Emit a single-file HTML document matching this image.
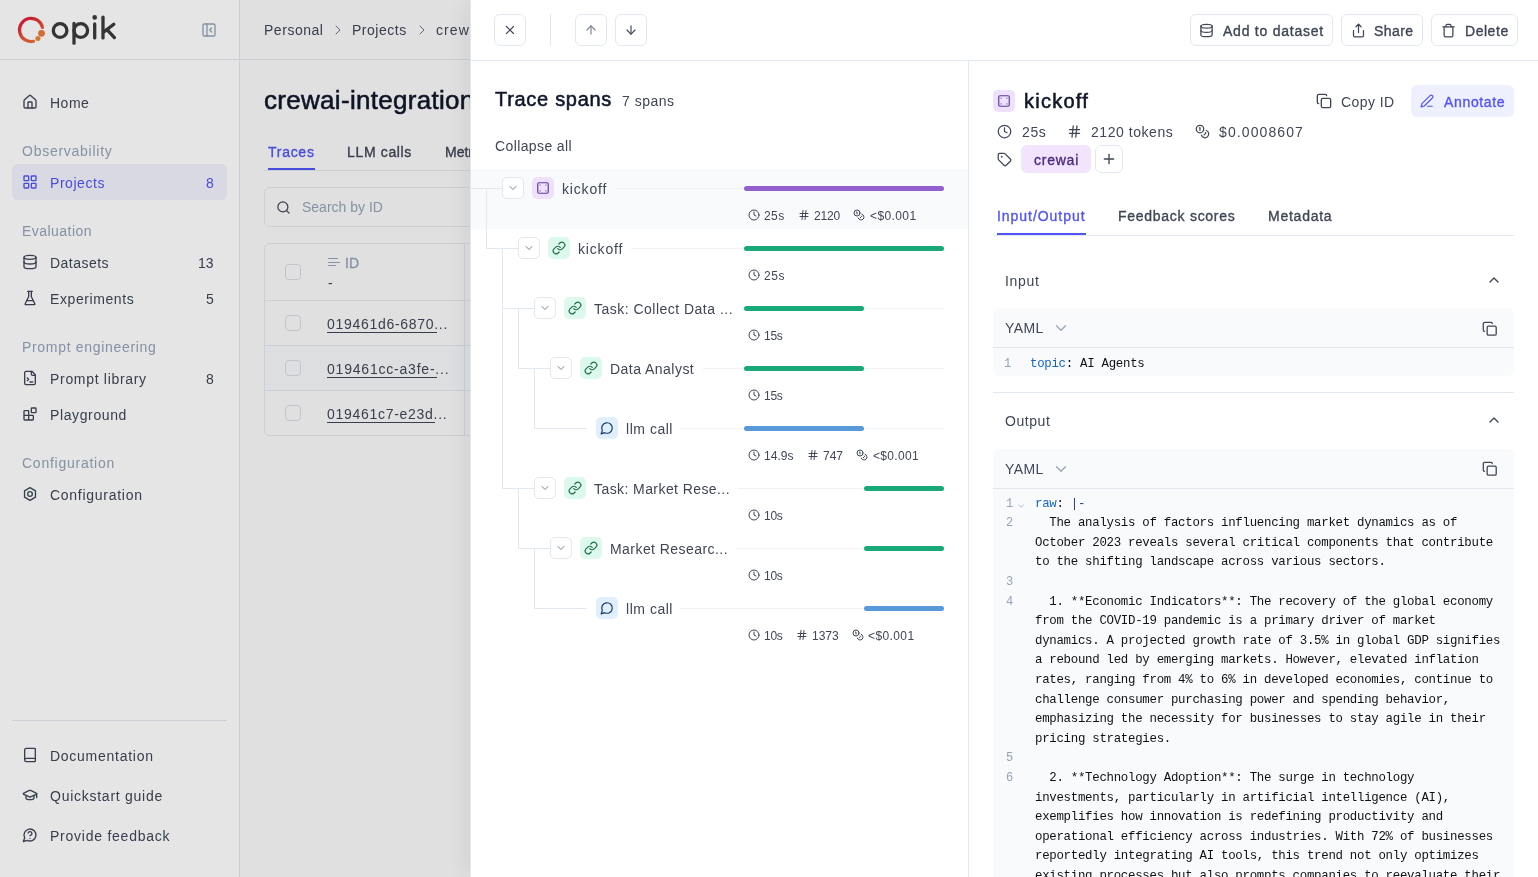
<!DOCTYPE html>
<html><head><meta charset="utf-8">
<style>
*{box-sizing:border-box;margin:0;padding:0}
html,body{width:1538px;height:877px;overflow:hidden;background:#fff;font-family:"Liberation Sans",sans-serif;color:#373D4D}
.a{position:absolute}
.t{position:absolute;white-space:pre;line-height:20px;font-size:14px;will-change:transform}
svg{display:block}
.ic{position:absolute;fill:none;stroke:currentColor;stroke-linecap:round;stroke-linejoin:round}
</style></head>
<body>

<div class="a" style="left:239px;top:0px;width:1px;height:877px;background:#E2E8F0"></div>
<div class="a" style="left:0px;top:59px;width:1538px;height:1px;background:#E2E8F0"></div>
<svg class="a" style="left:0;top:0" width="130" height="60" viewBox="0 0 130 60">
<defs><linearGradient id="lg" x1="20" y1="18" x2="36" y2="44" gradientUnits="userSpaceOnUse"><stop offset="0" stop-color="#DC1238"/><stop offset="1" stop-color="#EE7A36"/></linearGradient></defs>
<path d="M42.45 27.49 A11.6 11.6 0 1 0 33.51 41.25" stroke="url(#lg)" stroke-width="3.2" fill="none" stroke-linecap="round"/>
<circle cx="41.5" cy="33.3" r="3.4" fill="#EC7A36"/><circle cx="37.9" cy="38.4" r="2.5" fill="#EE8434"/>
<g stroke="#3A3A3D" stroke-width="3.3" fill="none" stroke-linecap="round" stroke-linejoin="round">
<circle cx="60.1" cy="30.5" r="6.8"/><circle cx="80.8" cy="30.5" r="6.8"/><path d="M74 23.4V43.2"/><path d="M94.7 24V37.9"/><path d="M103 17.2V37.9"/><path d="M113.8 24.2 104.6 31.4"/><path d="M107 29.6 114.4 37.6"/></g>
<circle cx="94.7" cy="17.4" r="2.3" fill="#3A3A3D"/></svg>
<svg class="ic" style="left:201px;top:22px;color:#94A3B8;" width="16" height="16" viewBox="0 0 24 24" stroke-width="2"><rect width="18" height="18" x="3" y="3" rx="2"/><path d="M9 3v18"/><path d="m16 15-3-3 3-3"/></svg>
<svg class="ic" style="left:22px;top:94px;color:#3F4656;" width="16" height="16" viewBox="0 0 24 24" stroke-width="2"><path d="M15 21v-8a1 1 0 0 0-1-1h-4a1 1 0 0 0-1 1v8"/><path d="M3 10a2 2 0 0 1 .709-1.528l7-5.999a2 2 0 0 1 2.582 0l7 5.999A2 2 0 0 1 21 10v9a2 2 0 0 1-2 2H5a2 2 0 0 1-2-2z"/></svg>
<div class="t" style="top:93.15px;font-size:14px;line-height:20px;color:#3F4656;left:50px;letter-spacing:0.514px;">Home</div>
<div class="t" style="top:141.15px;font-size:14px;line-height:20px;color:#94A3B8;left:22px;letter-spacing:0.737px;">Observability</div>
<div class="a" style="left:12px;top:164px;width:215px;height:36px;border-radius:6px;background:#F2F2FD"></div>
<svg class="ic" style="left:22px;top:174px;color:#5155F5;" width="16" height="16" viewBox="0 0 24 24" stroke-width="2"><rect width="7" height="7" x="3" y="3" rx="1"/><rect width="7" height="7" x="14" y="3" rx="1"/><rect width="7" height="7" x="14" y="14" rx="1"/><rect width="7" height="7" x="3" y="14" rx="1"/></svg>
<div class="t" style="top:173.15px;font-size:14px;line-height:20px;color:#5155F5;left:50px;letter-spacing:0.553px;">Projects</div>
<div class="t" style="top:173.15px;font-size:14px;line-height:20px;color:#5155F5;right:1324px;">8</div>
<div class="t" style="top:221.15px;font-size:14px;line-height:20px;color:#94A3B8;left:22px;letter-spacing:0.462px;">Evaluation</div>
<svg class="ic" style="left:22px;top:254px;color:#3F4656;" width="16" height="16" viewBox="0 0 24 24" stroke-width="2"><ellipse cx="12" cy="5" rx="9" ry="3"/><path d="M3 5V19A9 3 0 0 0 21 19V5"/><path d="M3 12A9 3 0 0 0 21 12"/></svg>
<div class="t" style="top:253.15px;font-size:14px;line-height:20px;color:#3F4656;left:50px;letter-spacing:0.481px;">Datasets</div>
<div class="t" style="top:253.15px;font-size:14px;line-height:20px;color:#3F4656;right:1324px;">13</div>
<svg class="ic" style="left:22px;top:290px;color:#3F4656;" width="16" height="16" viewBox="0 0 24 24" stroke-width="2"><path d="M10 2v7.527a2 2 0 0 1-.211.896L4.72 20.55a1 1 0 0 0 .9 1.45h12.76a1 1 0 0 0 .9-1.45l-5.069-10.127A2 2 0 0 1 14 9.527V2"/><path d="M8.5 2h7"/><path d="M7 16h10"/></svg>
<div class="t" style="top:289.15px;font-size:14px;line-height:20px;color:#3F4656;left:50px;letter-spacing:0.590px;">Experiments</div>
<div class="t" style="top:289.15px;font-size:14px;line-height:20px;color:#3F4656;right:1324px;">5</div>
<div class="t" style="top:337.15px;font-size:14px;line-height:20px;color:#94A3B8;left:22px;letter-spacing:0.684px;">Prompt engineering</div>
<svg class="ic" style="left:22px;top:370px;color:#3F4656;" width="16" height="16" viewBox="0 0 24 24" stroke-width="2"><path d="M15 2H6a2 2 0 0 0-2 2v16a2 2 0 0 0 2 2h12a2 2 0 0 0 2-2V7Z"/><path d="M14 2v4a2 2 0 0 0 2 2h4"/><path d="m8 16 2-2-2-2"/><path d="M12 18h4"/></svg>
<div class="t" style="top:369.15px;font-size:14px;line-height:20px;color:#3F4656;left:50px;letter-spacing:0.691px;">Prompt library</div>
<div class="t" style="top:369.15px;font-size:14px;line-height:20px;color:#3F4656;right:1324px;">8</div>
<svg class="ic" style="left:22px;top:406px;color:#3F4656;" width="16" height="16" viewBox="0 0 24 24" stroke-width="2"><rect width="7" height="7" x="14" y="3" rx="1"/><path d="M10 21V8a1 1 0 0 0-1-1H4a1 1 0 0 0-1 1v12a1 1 0 0 0 1 1h12a1 1 0 0 0 1-1v-5a1 1 0 0 0-1-1H3"/></svg>
<div class="t" style="top:405.15px;font-size:14px;line-height:20px;color:#3F4656;left:50px;letter-spacing:0.617px;">Playground</div>
<div class="t" style="top:453.15px;font-size:14px;line-height:20px;color:#94A3B8;left:22px;letter-spacing:0.748px;">Configuration</div>
<svg class="ic" style="left:22px;top:486px;color:#3F4656;" width="16" height="16" viewBox="0 0 24 24" stroke-width="2"><path d="M12 2.5 20.2 7.2v9.6L12 21.5 3.8 16.8V7.2z"/><circle cx="12" cy="12" r="3.5"/></svg>
<div class="t" style="top:485.15px;font-size:14px;line-height:20px;color:#3F4656;left:50px;letter-spacing:0.725px;">Configuration</div>
<div class="a" style="left:12px;top:720px;width:215px;height:1px;background:#E2E8F0"></div>
<svg class="ic" style="left:22px;top:747px;color:#3F4656;" width="16" height="16" viewBox="0 0 24 24" stroke-width="2"><path d="M4 19.5v-15A2.5 2.5 0 0 1 6.5 2H19a1 1 0 0 1 1 1v18a1 1 0 0 1-1 1H6.5a1 1 0 0 1 0-5H20"/></svg>
<div class="t" style="top:746.15px;font-size:14px;line-height:20px;color:#3F4656;left:50px;letter-spacing:0.733px;">Documentation</div>
<svg class="ic" style="left:22px;top:787px;color:#3F4656;" width="16" height="16" viewBox="0 0 24 24" stroke-width="2"><path d="M21.42 10.922a1 1 0 0 0-.019-1.838L12.83 5.18a2 2 0 0 0-1.66 0L2.6 9.08a1 1 0 0 0 0 1.832l8.57 3.908a2 2 0 0 0 1.66 0z"/><path d="M22 10v6"/><path d="M6 12.5V16a6 3 0 0 0 12 0v-3.5"/></svg>
<div class="t" style="top:786.15px;font-size:14px;line-height:20px;color:#3F4656;left:50px;letter-spacing:0.740px;">Quickstart guide</div>
<svg class="ic" style="left:22px;top:827px;color:#3F4656;" width="16" height="16" viewBox="0 0 24 24" stroke-width="2"><path d="M7.9 20A9 9 0 1 0 4 16.1L2 22Z"/><path d="M9.09 9a3 3 0 0 1 5.83 1c0 2-3 3-3 3"/><path d="M12 17h.01"/></svg>
<div class="t" style="top:826.15px;font-size:14px;line-height:20px;color:#3F4656;left:50px;letter-spacing:0.758px;">Provide feedback</div>
<div class="a" style="left:240px;top:0px;width:1298px;height:877px;background:#FAFAFA"></div>
<div class="a" style="left:240px;top:59px;width:1298px;height:1px;background:#E2E8F0"></div>
<div class="t" style="top:20.15px;font-size:14px;line-height:20px;color:#3F4656;left:264px;letter-spacing:0.531px;">Personal</div>
<svg class="ic" style="left:329.5px;top:22px;color:#64748B;" width="16" height="16" viewBox="0 0 24 24" stroke-width="1.5"><path d="m9 18 6-6-6-6"/></svg>
<div class="t" style="top:20.15px;font-size:14px;line-height:20px;color:#3F4656;left:352px;letter-spacing:0.516px;">Projects</div>
<svg class="ic" style="left:414px;top:22px;color:#64748B;" width="16" height="16" viewBox="0 0 24 24" stroke-width="1.5"><path d="m9 18 6-6-6-6"/></svg>
<div class="t" style="top:20.15px;font-size:14px;line-height:20px;color:#3F4656;left:436px;letter-spacing:1.084px;">crewai-integration</div>
<div class="t" style="top:83.99px;font-size:26px;line-height:32px;color:#0F172A;left:264px;letter-spacing:0.300px;-webkit-text-stroke:0.55px currentColor;">crewai-integration</div>
<div class="t" style="top:141.65px;font-size:14px;line-height:20px;color:#5155F5;left:268px;letter-spacing:0.722px;-webkit-text-stroke:0.35px currentColor;">Traces</div>
<div class="a" style="left:268px;top:168px;width:47px;height:2px;background:#5155F5"></div>
<div class="t" style="top:141.65px;font-size:14px;line-height:20px;color:#3F4656;left:347px;letter-spacing:0.652px;-webkit-text-stroke:0.35px currentColor;">LLM calls</div>
<div class="t" style="top:141.65px;font-size:14px;line-height:20px;color:#3F4656;left:445px;-webkit-text-stroke:0.35px currentColor;">Metrics</div>
<div class="a" style="left:264px;top:170px;width:1000px;height:1px;background:#E2E8F0"></div>
<div class="a" style="left:264px;top:187px;width:420px;height:40px;border:1px solid #E2E8F0;border-radius:6px"></div>
<svg class="ic" style="left:276px;top:200px;color:#3F4656;" width="15" height="15" viewBox="0 0 24 24" stroke-width="2"><circle cx="11" cy="11" r="8"/><path d="m21 21-4.3-4.3"/></svg>
<div class="t" style="top:197.15px;font-size:14px;line-height:20px;color:#94A3B8;left:301.5px;">Search by ID</div>
<div class="a" style="left:264px;top:243px;width:900px;height:193px;border:1px solid #E2E8F0;border-radius:6px"></div>
<div class="a" style="left:265px;top:346px;width:899px;height:44px;background:#F6F8FA"></div>
<div class="a" style="left:265px;top:300px;width:899px;height:1px;background:#E2E8F0"></div>
<div class="a" style="left:265px;top:345px;width:899px;height:1px;background:#E2E8F0"></div>
<div class="a" style="left:265px;top:390px;width:899px;height:1px;background:#E2E8F0"></div>
<div class="a" style="left:464px;top:244px;width:1px;height:191px;background:#E2E8F0"></div>
<div class="a" style="left:285px;top:264px;width:16px;height:16px;border:1px solid #D5DCE5;border-radius:4px"></div>
<div class="a" style="left:285px;top:315px;width:16px;height:16px;border:1px solid #D5DCE5;border-radius:4px"></div>
<div class="a" style="left:285px;top:360px;width:16px;height:16px;border:1px solid #D5DCE5;border-radius:4px"></div>
<div class="a" style="left:285px;top:405px;width:16px;height:16px;border:1px solid #D5DCE5;border-radius:4px"></div>
<div class="a" style="left:328px;top:257.8px;width:9.5px;height:1.4px;background:#94A3B8;border-radius:1px"></div>
<div class="a" style="left:328px;top:261.5px;width:12px;height:1.4px;background:#94A3B8;border-radius:1px"></div>
<div class="a" style="left:328px;top:265px;width:8px;height:1.4px;background:#94A3B8;border-radius:1px"></div>
<div class="t" style="top:252.65px;font-size:14px;line-height:20px;color:#94A3B8;left:345px;-webkit-text-stroke:0.35px currentColor;">ID</div>
<div class="t" style="top:273.15px;font-size:14px;line-height:20px;color:#3F4656;left:328px;">-</div>
<div class="t" style="top:314.15px;font-size:14px;line-height:20px;color:#3F4656;left:327px;letter-spacing:0.702px;">019461d6-6870...</div>
<div class="a" style="left:327px;top:332px;width:110px;height:1px;background:#3F4656"></div>
<div class="t" style="top:359.15px;font-size:14px;line-height:20px;color:#3F4656;left:327px;letter-spacing:0.791px;">019461cc-a3fe-...</div>
<div class="a" style="left:327px;top:377px;width:110px;height:1px;background:#3F4656"></div>
<div class="t" style="top:404.15px;font-size:14px;line-height:20px;color:#3F4656;left:327px;letter-spacing:0.714px;">019461c7-e23d...</div>
<div class="a" style="left:327px;top:422px;width:108px;height:1px;background:#3F4656"></div>
<div class="a" style="left:0px;top:0px;width:1538px;height:877px;background:rgba(0,0,0,0.1)"></div>
<div class="a" style="left:470px;top:0px;width:1068px;height:877px;background:#fff;box-shadow:-4px 0 26px rgba(0,0,0,0.08)"></div>
<div class="a" style="left:470px;top:0px;width:1px;height:877px;background:#E2E8F0"></div>
<div class="a" style="left:470px;top:60px;width:1068px;height:1px;background:#E2E8F0"></div>
<div class="a" style="left:968px;top:61px;width:1px;height:816px;background:#E2E8F0"></div>
<div class="a" style="left:494px;top:14px;width:32px;height:32px;border:1px solid #E2E8F0;border-radius:6px;background:#fff;"></div>
<svg class="ic" style="left:503px;top:23px;color:#3F4656;" width="14" height="14" viewBox="0 0 24 24" stroke-width="2"><path d="M18 6 6 18"/><path d="m6 6 12 12"/></svg>
<div class="a" style="left:550px;top:14px;width:1px;height:32px;background:#E2E8F0"></div>
<div class="a" style="left:575px;top:14px;width:32px;height:32px;border:1px solid #E2E8F0;border-radius:6px;background:#fff;"></div>
<svg class="ic" style="left:584px;top:23px;color:#7A8294;" width="14" height="14" viewBox="0 0 24 24" stroke-width="2"><path d="m5 12 7-7 7 7"/><path d="M12 19V5"/></svg>
<div class="a" style="left:615px;top:14px;width:32px;height:32px;border:1px solid #E2E8F0;border-radius:6px;background:#fff;"></div>
<svg class="ic" style="left:624px;top:23px;color:#3F4656;" width="14" height="14" viewBox="0 0 24 24" stroke-width="2"><path d="M12 5v14"/><path d="m19 12-7 7-7-7"/></svg>
<div class="a" style="left:1190px;top:14px;width:143px;height:32px;border:1px solid #E2E8F0;border-radius:6px;background:#fff;"></div>
<svg class="ic" style="left:1199px;top:23px;color:#3F4656;" width="15" height="15" viewBox="0 0 24 24" stroke-width="2"><ellipse cx="12" cy="5" rx="9" ry="3"/><path d="M3 5V19A9 3 0 0 0 21 19V5"/><path d="M3 12A9 3 0 0 0 21 12"/></svg>
<div class="t" style="top:20.65px;font-size:14px;line-height:20px;color:#3F4656;left:1223px;letter-spacing:0.765px;-webkit-text-stroke:0.35px currentColor;">Add to dataset</div>
<div class="a" style="left:1341px;top:14px;width:82px;height:32px;border:1px solid #E2E8F0;border-radius:6px;background:#fff;"></div>
<svg class="ic" style="left:1351px;top:23px;color:#3F4656;" width="15" height="15" viewBox="0 0 24 24" stroke-width="2"><path d="M4 12v8a2 2 0 0 0 2 2h12a2 2 0 0 0 2-2v-8"/><path d="M16 6 12 2 8 6"/><path d="M12 2v13"/></svg>
<div class="t" style="top:20.65px;font-size:14px;line-height:20px;color:#3F4656;left:1374.4px;letter-spacing:0.448px;-webkit-text-stroke:0.35px currentColor;">Share</div>
<div class="a" style="left:1431px;top:14px;width:87px;height:32px;border:1px solid #E2E8F0;border-radius:6px;background:#fff;"></div>
<svg class="ic" style="left:1441px;top:23px;color:#3F4656;" width="15" height="15" viewBox="0 0 24 24" stroke-width="2"><path d="M3 6h18"/><path d="M19 6v14c0 1-1 2-2 2H7c-1 0-2-1-2-2V6"/><path d="M8 6V4c0-1 1-2 2-2h4c1 0 2 1 2 2v2"/></svg>
<div class="t" style="top:20.65px;font-size:14px;line-height:20px;color:#3F4656;left:1464.5px;letter-spacing:0.539px;-webkit-text-stroke:0.35px currentColor;">Delete</div>
<div class="t" style="top:85.07px;font-size:20px;line-height:28px;color:#0F172A;left:495px;letter-spacing:0.699px;-webkit-text-stroke:0.55px currentColor;">Trace spans</div>
<div class="t" style="top:91.15px;font-size:14px;line-height:20px;color:#3F4656;left:621.6px;letter-spacing:0.495px;">7 spans</div>
<div class="t" style="top:136.15px;font-size:14px;line-height:20px;color:#3F4656;left:495px;letter-spacing:0.386px;">Collapse all</div>
<div class="a" style="left:471px;top:169px;width:497px;height:60px;background:#F8FAFC"></div>
<div class="a" style="left:470px;top:188px;width:32px;height:1px;background:#E2E8F0"></div>
<div class="a" style="left:486px;top:188px;width:1px;height:61px;background:#E2E8F0"></div>
<div class="a" style="left:486px;top:248px;width:32px;height:1px;background:#E2E8F0"></div>
<div class="a" style="left:502px;top:248px;width:1px;height:241px;background:#E2E8F0"></div>
<div class="a" style="left:502px;top:308px;width:32px;height:1px;background:#E2E8F0"></div>
<div class="a" style="left:518px;top:308px;width:1px;height:61px;background:#E2E8F0"></div>
<div class="a" style="left:518px;top:368px;width:32px;height:1px;background:#E2E8F0"></div>
<div class="a" style="left:534px;top:368px;width:1px;height:61px;background:#E2E8F0"></div>
<div class="a" style="left:534px;top:428px;width:53px;height:1px;background:#E2E8F0"></div>
<div class="a" style="left:502px;top:488px;width:32px;height:1px;background:#E2E8F0"></div>
<div class="a" style="left:518px;top:488px;width:1px;height:61px;background:#E2E8F0"></div>
<div class="a" style="left:518px;top:548px;width:32px;height:1px;background:#E2E8F0"></div>
<div class="a" style="left:534px;top:548px;width:1px;height:61px;background:#E2E8F0"></div>
<div class="a" style="left:534px;top:608px;width:53px;height:1px;background:#E2E8F0"></div>
<div class="a" style="left:502px;top:177px;width:22px;height:22px;border:1px solid #E2E8F0;border-radius:5px;background:#fff"></div>
<svg class="ic" style="left:507px;top:182px;color:#64748B;" width="12" height="12" viewBox="0 0 24 24" stroke-width="1.8"><path d="m6 9 6 6 6-6"/></svg>
<div class="a" style="left:532px;top:177px;width:22px;height:22px;border-radius:5px;background:#EFE1FB"></div>
<svg class="ic" style="left:536px;top:181px;color:#5E3A9C;" width="14" height="14" viewBox="0 0 24 24" stroke-width="2"><rect x="3" y="3" width="18" height="18" rx="2"/><path d="M7 7h.01M17 7h.01M7 17h.01M17 17h.01"/></svg>
<div class="t" style="top:179.15px;font-size:14px;line-height:20px;color:#3F4656;left:562px;letter-spacing:0.825px;">kickoff</div>
<div class="a" style="left:615.2px;top:188px;width:328.79999999999995px;height:1px;background:#EEF2F6"></div>
<div class="a" style="left:744px;top:185.5px;width:200px;height:5px;border-radius:3px;background:#945FCF"></div>
<svg class="ic" style="left:747.7px;top:209px;color:#3F4656;" width="12" height="12" viewBox="0 0 24 24" stroke-width="2"><circle cx="12" cy="12" r="10"/><path d="M12 6v6l4 2"/></svg>
<div class="t" style="top:205.54px;font-size:12px;line-height:20px;color:#3F4656;left:764.3000000000001px;letter-spacing:0.417px;">25s</div>
<svg class="ic" style="left:797.6000000000001px;top:209px;color:#3F4656;" width="12" height="12" viewBox="0 0 24 24" stroke-width="2"><path d="M4 9h16"/><path d="M4 15h16"/><path d="M10 3 8 21"/><path d="M16 3l-2 18"/></svg>
<div class="t" style="top:205.54px;font-size:12px;line-height:20px;color:#3F4656;left:813.6000000000001px;letter-spacing:-0.149px;">2120</div>
<svg class="ic" style="left:853.4000000000002px;top:209px;color:#3F4656;" width="12" height="12" viewBox="0 0 24 24" stroke-width="2"><circle cx="8" cy="8" r="6"/><path d="M18.09 10.37A6 6 0 1 1 10.34 18"/><path d="M7 6h1v4"/><path d="m16.71 13.88.7.71-2.82 2.82"/></svg>
<div class="t" style="top:205.54px;font-size:12px;line-height:20px;color:#3F4656;left:870.0000000000002px;letter-spacing:0.398px;">&lt;$0.001</div>
<div class="a" style="left:518px;top:237px;width:22px;height:22px;border:1px solid #E2E8F0;border-radius:5px;background:#fff"></div>
<svg class="ic" style="left:523px;top:242px;color:#64748B;" width="12" height="12" viewBox="0 0 24 24" stroke-width="1.8"><path d="m6 9 6 6 6-6"/></svg>
<div class="a" style="left:548px;top:237px;width:22px;height:22px;border-radius:5px;background:#DDF8EC"></div>
<svg class="ic" style="left:552px;top:241px;color:#1F6B4A;" width="14" height="14" viewBox="0 0 24 24" stroke-width="2"><path d="M10 13a5 5 0 0 0 7.54.54l3-3a5 5 0 0 0-7.07-7.07l-1.72 1.71"/><path d="M14 11a5 5 0 0 0-7.54-.54l-3 3a5 5 0 0 0 7.07 7.07l1.71-1.71"/></svg>
<div class="t" style="top:239.15px;font-size:14px;line-height:20px;color:#3F4656;left:578px;letter-spacing:0.825px;">kickoff</div>
<div class="a" style="left:631.2px;top:248px;width:312.79999999999995px;height:1px;background:#EEF2F6"></div>
<div class="a" style="left:744px;top:245.5px;width:200px;height:5px;border-radius:3px;background:#19A979"></div>
<svg class="ic" style="left:747.7px;top:269px;color:#3F4656;" width="12" height="12" viewBox="0 0 24 24" stroke-width="2"><circle cx="12" cy="12" r="10"/><path d="M12 6v6l4 2"/></svg>
<div class="t" style="top:265.54px;font-size:12px;line-height:20px;color:#3F4656;left:764.3000000000001px;letter-spacing:0.551px;">25s</div>
<div class="a" style="left:534px;top:297px;width:22px;height:22px;border:1px solid #E2E8F0;border-radius:5px;background:#fff"></div>
<svg class="ic" style="left:539px;top:302px;color:#64748B;" width="12" height="12" viewBox="0 0 24 24" stroke-width="1.8"><path d="m6 9 6 6 6-6"/></svg>
<div class="a" style="left:564px;top:297px;width:22px;height:22px;border-radius:5px;background:#DDF8EC"></div>
<svg class="ic" style="left:568px;top:301px;color:#1F6B4A;" width="14" height="14" viewBox="0 0 24 24" stroke-width="2"><path d="M10 13a5 5 0 0 0 7.54.54l3-3a5 5 0 0 0-7.07-7.07l-1.72 1.71"/><path d="M14 11a5 5 0 0 0-7.54-.54l-3 3a5 5 0 0 0 7.07 7.07l1.71-1.71"/></svg>
<div class="t" style="top:299.15px;font-size:14px;line-height:20px;color:#3F4656;left:594px;letter-spacing:0.483px;">Task: Collect Data ...</div>
<div class="a" style="left:741px;top:308px;width:203px;height:1px;background:#EEF2F6"></div>
<div class="a" style="left:744px;top:305.5px;width:120px;height:5px;border-radius:3px;background:#19A979"></div>
<svg class="ic" style="left:747.7px;top:329px;color:#3F4656;" width="12" height="12" viewBox="0 0 24 24" stroke-width="2"><circle cx="12" cy="12" r="10"/><path d="M12 6v6l4 2"/></svg>
<div class="t" style="top:325.54px;font-size:12px;line-height:20px;color:#3F4656;left:764.3000000000001px;letter-spacing:-0.283px;">15s</div>
<div class="a" style="left:550px;top:357px;width:22px;height:22px;border:1px solid #E2E8F0;border-radius:5px;background:#fff"></div>
<svg class="ic" style="left:555px;top:362px;color:#64748B;" width="12" height="12" viewBox="0 0 24 24" stroke-width="1.8"><path d="m6 9 6 6 6-6"/></svg>
<div class="a" style="left:580px;top:357px;width:22px;height:22px;border-radius:5px;background:#DDF8EC"></div>
<svg class="ic" style="left:584px;top:361px;color:#1F6B4A;" width="14" height="14" viewBox="0 0 24 24" stroke-width="2"><path d="M10 13a5 5 0 0 0 7.54.54l3-3a5 5 0 0 0-7.07-7.07l-1.72 1.71"/><path d="M14 11a5 5 0 0 0-7.54-.54l-3 3a5 5 0 0 0 7.07 7.07l1.71-1.71"/></svg>
<div class="t" style="top:359.15px;font-size:14px;line-height:20px;color:#3F4656;left:610px;letter-spacing:0.469px;">Data Analyst</div>
<div class="a" style="left:703px;top:368px;width:241px;height:1px;background:#EEF2F6"></div>
<div class="a" style="left:744px;top:365.5px;width:120px;height:5px;border-radius:3px;background:#19A979"></div>
<svg class="ic" style="left:747.7px;top:389px;color:#3F4656;" width="12" height="12" viewBox="0 0 24 24" stroke-width="2"><circle cx="12" cy="12" r="10"/><path d="M12 6v6l4 2"/></svg>
<div class="t" style="top:385.54px;font-size:12px;line-height:20px;color:#3F4656;left:764.3000000000001px;letter-spacing:-0.283px;">15s</div>
<div class="a" style="left:596px;top:417px;width:22px;height:22px;border-radius:5px;background:#E1EFFC"></div>
<svg class="ic" style="left:600px;top:421px;color:#123A6A;" width="14" height="14" viewBox="0 0 24 24" stroke-width="2"><path d="M7.9 20A9 9 0 1 0 4 16.1L2 22Z"/></svg>
<div class="t" style="top:419.15px;font-size:14px;line-height:20px;color:#3F4656;left:626px;letter-spacing:0.528px;">llm call</div>
<div class="a" style="left:681px;top:428px;width:263px;height:1px;background:#EEF2F6"></div>
<div class="a" style="left:744px;top:425.5px;width:120px;height:5px;border-radius:3px;background:#5899DA"></div>
<svg class="ic" style="left:747.7px;top:449px;color:#3F4656;" width="12" height="12" viewBox="0 0 24 24" stroke-width="2"><circle cx="12" cy="12" r="10"/><path d="M12 6v6l4 2"/></svg>
<div class="t" style="top:445.54px;font-size:12px;line-height:20px;color:#3F4656;left:764.3000000000001px;letter-spacing:0.049px;">14.9s</div>
<svg class="ic" style="left:806.6000000000001px;top:449px;color:#3F4656;" width="12" height="12" viewBox="0 0 24 24" stroke-width="2"><path d="M4 9h16"/><path d="M4 15h16"/><path d="M10 3 8 21"/><path d="M16 3l-2 18"/></svg>
<div class="t" style="top:445.54px;font-size:12px;line-height:20px;color:#3F4656;left:822.6000000000001px;letter-spacing:-0.007px;">747</div>
<svg class="ic" style="left:856.3000000000002px;top:449px;color:#3F4656;" width="12" height="12" viewBox="0 0 24 24" stroke-width="2"><circle cx="8" cy="8" r="6"/><path d="M18.09 10.37A6 6 0 1 1 10.34 18"/><path d="M7 6h1v4"/><path d="m16.71 13.88.7.71-2.82 2.82"/></svg>
<div class="t" style="top:445.54px;font-size:12px;line-height:20px;color:#3F4656;left:872.9000000000002px;letter-spacing:0.327px;">&lt;$0.001</div>
<div class="a" style="left:534px;top:477px;width:22px;height:22px;border:1px solid #E2E8F0;border-radius:5px;background:#fff"></div>
<svg class="ic" style="left:539px;top:482px;color:#64748B;" width="12" height="12" viewBox="0 0 24 24" stroke-width="1.8"><path d="m6 9 6 6 6-6"/></svg>
<div class="a" style="left:564px;top:477px;width:22px;height:22px;border-radius:5px;background:#DDF8EC"></div>
<svg class="ic" style="left:568px;top:481px;color:#1F6B4A;" width="14" height="14" viewBox="0 0 24 24" stroke-width="2"><path d="M10 13a5 5 0 0 0 7.54.54l3-3a5 5 0 0 0-7.07-7.07l-1.72 1.71"/><path d="M14 11a5 5 0 0 0-7.54-.54l-3 3a5 5 0 0 0 7.07 7.07l1.71-1.71"/></svg>
<div class="t" style="top:479.15px;font-size:14px;line-height:20px;color:#3F4656;left:594px;letter-spacing:0.420px;">Task: Market Rese...</div>
<div class="a" style="left:738px;top:488px;width:206px;height:1px;background:#EEF2F6"></div>
<div class="a" style="left:864px;top:485.5px;width:80px;height:5px;border-radius:3px;background:#19A979"></div>
<svg class="ic" style="left:747.7px;top:509px;color:#3F4656;" width="12" height="12" viewBox="0 0 24 24" stroke-width="2"><circle cx="12" cy="12" r="10"/><path d="M12 6v6l4 2"/></svg>
<div class="t" style="top:505.54px;font-size:12px;line-height:20px;color:#3F4656;left:764.3000000000001px;letter-spacing:-0.283px;">10s</div>
<div class="a" style="left:550px;top:537px;width:22px;height:22px;border:1px solid #E2E8F0;border-radius:5px;background:#fff"></div>
<svg class="ic" style="left:555px;top:542px;color:#64748B;" width="12" height="12" viewBox="0 0 24 24" stroke-width="1.8"><path d="m6 9 6 6 6-6"/></svg>
<div class="a" style="left:580px;top:537px;width:22px;height:22px;border-radius:5px;background:#DDF8EC"></div>
<svg class="ic" style="left:584px;top:541px;color:#1F6B4A;" width="14" height="14" viewBox="0 0 24 24" stroke-width="2"><path d="M10 13a5 5 0 0 0 7.54.54l3-3a5 5 0 0 0-7.07-7.07l-1.72 1.71"/><path d="M14 11a5 5 0 0 0-7.54-.54l-3 3a5 5 0 0 0 7.07 7.07l1.71-1.71"/></svg>
<div class="t" style="top:539.15px;font-size:14px;line-height:20px;color:#3F4656;left:610px;letter-spacing:0.443px;">Market Researc...</div>
<div class="a" style="left:736px;top:548px;width:208px;height:1px;background:#EEF2F6"></div>
<div class="a" style="left:864px;top:545.5px;width:80px;height:5px;border-radius:3px;background:#19A979"></div>
<svg class="ic" style="left:747.7px;top:569px;color:#3F4656;" width="12" height="12" viewBox="0 0 24 24" stroke-width="2"><circle cx="12" cy="12" r="10"/><path d="M12 6v6l4 2"/></svg>
<div class="t" style="top:565.54px;font-size:12px;line-height:20px;color:#3F4656;left:764.3000000000001px;letter-spacing:-0.283px;">10s</div>
<div class="a" style="left:596px;top:597px;width:22px;height:22px;border-radius:5px;background:#E1EFFC"></div>
<svg class="ic" style="left:600px;top:601px;color:#123A6A;" width="14" height="14" viewBox="0 0 24 24" stroke-width="2"><path d="M7.9 20A9 9 0 1 0 4 16.1L2 22Z"/></svg>
<div class="t" style="top:599.15px;font-size:14px;line-height:20px;color:#3F4656;left:626px;letter-spacing:0.528px;">llm call</div>
<div class="a" style="left:681px;top:608px;width:263px;height:1px;background:#EEF2F6"></div>
<div class="a" style="left:864px;top:605.5px;width:80px;height:5px;border-radius:3px;background:#5899DA"></div>
<svg class="ic" style="left:747.7px;top:629px;color:#3F4656;" width="12" height="12" viewBox="0 0 24 24" stroke-width="2"><circle cx="12" cy="12" r="10"/><path d="M12 6v6l4 2"/></svg>
<div class="t" style="top:625.54px;font-size:12px;line-height:20px;color:#3F4656;left:764.3000000000001px;letter-spacing:-0.283px;">10s</div>
<svg class="ic" style="left:795.5000000000001px;top:629px;color:#3F4656;" width="12" height="12" viewBox="0 0 24 24" stroke-width="2"><path d="M4 9h16"/><path d="M4 15h16"/><path d="M10 3 8 21"/><path d="M16 3l-2 18"/></svg>
<div class="t" style="top:625.54px;font-size:12px;line-height:20px;color:#3F4656;left:811.5000000000001px;letter-spacing:-0.024px;">1373</div>
<svg class="ic" style="left:851.8000000000002px;top:629px;color:#3F4656;" width="12" height="12" viewBox="0 0 24 24" stroke-width="2"><circle cx="8" cy="8" r="6"/><path d="M18.09 10.37A6 6 0 1 1 10.34 18"/><path d="M7 6h1v4"/><path d="m16.71 13.88.7.71-2.82 2.82"/></svg>
<div class="t" style="top:625.54px;font-size:12px;line-height:20px;color:#3F4656;left:868.4000000000002px;letter-spacing:0.398px;">&lt;$0.001</div>
<div class="a" style="left:993px;top:90px;width:22px;height:22px;border-radius:5px;background:#EFE1FB"></div>
<svg class="ic" style="left:997px;top:94px;color:#5E3A9C;" width="14" height="14" viewBox="0 0 24 24" stroke-width="2"><rect x="3" y="3" width="18" height="18" rx="2"/><path d="M7 7h.01M17 7h.01M7 17h.01M17 17h.01"/></svg>
<div class="t" style="top:87.07px;font-size:20px;line-height:28px;color:#0F172A;left:1023.9px;letter-spacing:1.240px;-webkit-text-stroke:0.55px currentColor;">kickoff</div>
<svg class="ic" style="left:1315.5px;top:93px;color:#3F4656;" width="16" height="16" viewBox="0 0 24 24" stroke-width="2"><rect width="14" height="14" x="8" y="8" rx="2" ry="2"/><path d="M4 16c-1.1 0-2-.9-2-2V4c0-1.1.9-2 2-2h10c1.1 0 2 .9 2 2"/></svg>
<div class="t" style="top:91.95px;font-size:14px;line-height:20px;color:#3F4656;left:1340.7px;letter-spacing:0.418px;">Copy ID</div>
<div class="a" style="left:1411px;top:85px;width:103px;height:32px;border-radius:6px;background:#EFF0FE"></div>
<svg class="ic" style="left:1420px;top:94px;color:#5155F5;" width="14" height="14" viewBox="0 0 24 24" stroke-width="2"><path d="M13 21h8"/><path d="M21.174 6.812a1 1 0 0 0-3.986-3.987L3.842 16.174a2 2 0 0 0-.5.83l-1.321 4.352a.5.5 0 0 0 .623.622l4.353-1.32a2 2 0 0 0 .83-.497z"/></svg>
<div class="t" style="top:91.95px;font-size:14px;line-height:20px;color:#5155F5;left:1443.6px;letter-spacing:0.657px;-webkit-text-stroke:0.35px currentColor;">Annotate</div>
<svg class="ic" style="left:997px;top:124px;color:#3F4656;" width="15" height="15" viewBox="0 0 24 24" stroke-width="2"><circle cx="12" cy="12" r="10"/><path d="M12 6v6l4 2"/></svg>
<div class="t" style="top:121.75px;font-size:14px;line-height:20px;color:#3F4656;left:1021.9px;letter-spacing:0.643px;">25s</div>
<svg class="ic" style="left:1067px;top:124px;color:#3F4656;" width="15" height="15" viewBox="0 0 24 24" stroke-width="2"><path d="M4 9h16"/><path d="M4 15h16"/><path d="M10 3 8 21"/><path d="M16 3l-2 18"/></svg>
<div class="t" style="top:121.75px;font-size:14px;line-height:20px;color:#3F4656;left:1091.2px;letter-spacing:0.547px;">2120 tokens</div>
<svg class="ic" style="left:1195px;top:124px;color:#3F4656;" width="15" height="15" viewBox="0 0 24 24" stroke-width="2"><circle cx="8" cy="8" r="6"/><path d="M18.09 10.37A6 6 0 1 1 10.34 18"/><path d="M7 6h1v4"/><path d="m16.71 13.88.7.71-2.82 2.82"/></svg>
<div class="t" style="top:121.75px;font-size:14px;line-height:20px;color:#3F4656;left:1218.8px;letter-spacing:1.104px;">$0.0008607</div>
<svg class="ic" style="left:997px;top:152px;color:#3F4656;" width="15" height="15" viewBox="0 0 24 24" stroke-width="2"><path d="M12.586 2.586A2 2 0 0 0 11.172 2H4a2 2 0 0 0-2 2v7.172a2 2 0 0 0 .586 1.414l8.704 8.704a2.426 2.426 0 0 0 3.42 0l6.58-6.58a2.426 2.426 0 0 0 0-3.42z"/><circle cx="7.5" cy="7.5" r=".5" fill="currentColor"/></svg>
<div class="a" style="left:1021px;top:145px;width:70px;height:28px;border-radius:6px;background:#F1E4FC"></div>
<div class="t" style="top:149.65px;font-size:14px;line-height:20px;color:#4E2A84;left:1033.7px;letter-spacing:0.757px;-webkit-text-stroke:0.35px currentColor;">crewai</div>
<div class="a" style="left:1095px;top:145px;width:28px;height:28px;border:1px solid #E2E8F0;border-radius:6px;background:#fff"></div>
<svg class="ic" style="left:1101px;top:151px;color:#3F4656;" width="16" height="16" viewBox="0 0 24 24" stroke-width="2"><path d="M5 12h14"/><path d="M12 5v14"/></svg>
<div class="t" style="top:206.35px;font-size:14px;line-height:20px;color:#5155F5;left:997.2px;letter-spacing:0.954px;-webkit-text-stroke:0.35px currentColor;">Input/Output</div>
<div class="a" style="left:997px;top:233px;width:89px;height:2px;background:#5155F5"></div>
<div class="t" style="top:206.35px;font-size:14px;line-height:20px;color:#3F4656;left:1118px;letter-spacing:0.726px;-webkit-text-stroke:0.35px currentColor;">Feedback scores</div>
<div class="t" style="top:206.35px;font-size:14px;line-height:20px;color:#3F4656;left:1268.2px;letter-spacing:0.753px;-webkit-text-stroke:0.35px currentColor;">Metadata</div>
<div class="a" style="left:993px;top:235px;width:521px;height:1px;background:#E2E8F0"></div>
<div class="t" style="top:271.15px;font-size:14px;line-height:20px;color:#3F4656;left:1005.4px;letter-spacing:0.692px;">Input</div>
<svg class="ic" style="left:1486px;top:272px;color:#3F4656;" width="16" height="16" viewBox="0 0 24 24" stroke-width="2"><path d="m18 15-6-6-6 6"/></svg>
<div class="a" style="left:993px;top:308px;width:521px;height:68px;border-radius:6px;background:#F8FAFC"></div>
<div class="t" style="top:318.45px;font-size:14px;line-height:20px;color:#3F4656;left:1005.4px;letter-spacing:0.379px;">YAML</div>
<svg class="ic" style="left:1052px;top:319px;color:#94A3B8;" width="18" height="18" viewBox="0 0 24 24" stroke-width="1.6"><path d="m6 9 6 6 6-6"/></svg>
<svg class="ic" style="left:1482px;top:320.5px;color:#3F4656;" width="15.5" height="15.5" viewBox="0 0 24 24" stroke-width="2"><rect width="14" height="14" x="8" y="8" rx="2" ry="2"/><path d="M4 16c-1.1 0-2-.9-2-2V4c0-1.1.9-2 2-2h10c1.1 0 2 .9 2 2"/></svg>
<div class="a" style="left:993px;top:347px;width:521px;height:1px;background:#E2E8F0"></div>
<div class="t" style="top:353.80px;font-size:12px;line-height:20px;color:#94A3B8;left:1004px;font-family:'Liberation Mono',monospace;">1</div>
<div class="t" style="left:1030.2px;top:354px;font-family:'Liberation Mono',monospace;font-size:12.4px;line-height:20px;color:#111;letter-spacing:-0.28px"><span style="color:#1565C0">topic</span>: AI Agents</div>
<div class="a" style="left:993px;top:392px;width:521px;height:1px;background:#E2E8F0"></div>
<div class="t" style="top:411.15px;font-size:14px;line-height:20px;color:#3F4656;left:1005.4px;letter-spacing:0.562px;">Output</div>
<svg class="ic" style="left:1486px;top:412px;color:#3F4656;" width="16" height="16" viewBox="0 0 24 24" stroke-width="2"><path d="m18 15-6-6-6 6"/></svg>
<div class="a" style="left:993px;top:449px;width:521px;height:440px;border-radius:6px;background:#F8FAFC"></div>
<div class="t" style="top:459.15px;font-size:14px;line-height:20px;color:#3F4656;left:1005.4px;letter-spacing:0.379px;">YAML</div>
<svg class="ic" style="left:1052px;top:460px;color:#94A3B8;" width="18" height="18" viewBox="0 0 24 24" stroke-width="1.6"><path d="m6 9 6 6 6-6"/></svg>
<svg class="ic" style="left:1482px;top:460.5px;color:#3F4656;" width="15.5" height="15.5" viewBox="0 0 24 24" stroke-width="2"><rect width="14" height="14" x="8" y="8" rx="2" ry="2"/><path d="M4 16c-1.1 0-2-.9-2-2V4c0-1.1.9-2 2-2h10c1.1 0 2 .9 2 2"/></svg>
<div class="a" style="left:993px;top:488px;width:521px;height:1px;background:#E2E8F0"></div>
<div class="t" style="left:1005.5px;top:493.5px;font-family:'Liberation Mono',monospace;font-size:12px;line-height:20px;color:#94A3B8">1</div>
<div class="t" style="left:1034.7px;top:493.5px;font-family:'Liberation Mono',monospace;font-size:12.4px;line-height:20px;color:#111;letter-spacing:-0.28px"><span style="color:#1565C0">raw</span>: <span style="color:#2B3A8F">|-</span></div>
<svg class="ic" style="left:1016px;top:501.0px;color:#94A3B8;" width="10" height="10" viewBox="0 0 24 24" stroke-width="1.6"><path d="m6 9 6 6 6-6"/></svg>
<div class="t" style="left:1005.5px;top:513.1px;font-family:'Liberation Mono',monospace;font-size:12px;line-height:20px;color:#94A3B8">2</div>
<div class="t" style="left:1034.7px;top:513.1px;font-family:'Liberation Mono',monospace;font-size:12.4px;line-height:20px;color:#111;letter-spacing:-0.28px">  The analysis of factors influencing market dynamics as of</div>
<div class="t" style="left:1034.7px;top:532.7px;font-family:'Liberation Mono',monospace;font-size:12.4px;line-height:20px;color:#111;letter-spacing:-0.28px">October 2023 reveals several critical components that contribute</div>
<div class="t" style="left:1034.7px;top:552.3px;font-family:'Liberation Mono',monospace;font-size:12.4px;line-height:20px;color:#111;letter-spacing:-0.28px">to the shifting landscape across various sectors.</div>
<div class="t" style="left:1005.5px;top:571.9px;font-family:'Liberation Mono',monospace;font-size:12px;line-height:20px;color:#94A3B8">3</div>
<div class="t" style="left:1005.5px;top:591.5px;font-family:'Liberation Mono',monospace;font-size:12px;line-height:20px;color:#94A3B8">4</div>
<div class="t" style="left:1034.7px;top:591.5px;font-family:'Liberation Mono',monospace;font-size:12.4px;line-height:20px;color:#111;letter-spacing:-0.28px">  1. **Economic Indicators**: The recovery of the global economy</div>
<div class="t" style="left:1034.7px;top:611.1px;font-family:'Liberation Mono',monospace;font-size:12.4px;line-height:20px;color:#111;letter-spacing:-0.28px">from the COVID-19 pandemic is a primary driver of market</div>
<div class="t" style="left:1034.7px;top:630.7px;font-family:'Liberation Mono',monospace;font-size:12.4px;line-height:20px;color:#111;letter-spacing:-0.28px">dynamics. A projected growth rate of 3.5% in global GDP signifies</div>
<div class="t" style="left:1034.7px;top:650.3px;font-family:'Liberation Mono',monospace;font-size:12.4px;line-height:20px;color:#111;letter-spacing:-0.28px">a rebound led by emerging markets. However, elevated inflation</div>
<div class="t" style="left:1034.7px;top:669.9px;font-family:'Liberation Mono',monospace;font-size:12.4px;line-height:20px;color:#111;letter-spacing:-0.28px">rates, ranging from 4% to 6% in developed economies, continue to</div>
<div class="t" style="left:1034.7px;top:689.5px;font-family:'Liberation Mono',monospace;font-size:12.4px;line-height:20px;color:#111;letter-spacing:-0.28px">challenge consumer purchasing power and spending behavior,</div>
<div class="t" style="left:1034.7px;top:709.1px;font-family:'Liberation Mono',monospace;font-size:12.4px;line-height:20px;color:#111;letter-spacing:-0.28px">emphasizing the necessity for businesses to stay agile in their</div>
<div class="t" style="left:1034.7px;top:728.7px;font-family:'Liberation Mono',monospace;font-size:12.4px;line-height:20px;color:#111;letter-spacing:-0.28px">pricing strategies.</div>
<div class="t" style="left:1005.5px;top:748.3px;font-family:'Liberation Mono',monospace;font-size:12px;line-height:20px;color:#94A3B8">5</div>
<div class="t" style="left:1005.5px;top:767.9px;font-family:'Liberation Mono',monospace;font-size:12px;line-height:20px;color:#94A3B8">6</div>
<div class="t" style="left:1034.7px;top:767.9px;font-family:'Liberation Mono',monospace;font-size:12.4px;line-height:20px;color:#111;letter-spacing:-0.28px">  2. **Technology Adoption**: The surge in technology</div>
<div class="t" style="left:1034.7px;top:787.5px;font-family:'Liberation Mono',monospace;font-size:12.4px;line-height:20px;color:#111;letter-spacing:-0.28px">investments, particularly in artificial intelligence (AI),</div>
<div class="t" style="left:1034.7px;top:807.1px;font-family:'Liberation Mono',monospace;font-size:12.4px;line-height:20px;color:#111;letter-spacing:-0.28px">exemplifies how innovation is redefining productivity and</div>
<div class="t" style="left:1034.7px;top:826.7px;font-family:'Liberation Mono',monospace;font-size:12.4px;line-height:20px;color:#111;letter-spacing:-0.28px">operational efficiency across industries. With 72% of businesses</div>
<div class="t" style="left:1034.7px;top:846.3px;font-family:'Liberation Mono',monospace;font-size:12.4px;line-height:20px;color:#111;letter-spacing:-0.28px">reportedly integrating AI tools, this trend not only optimizes</div>
<div class="t" style="left:1034.7px;top:865.9px;font-family:'Liberation Mono',monospace;font-size:12.4px;line-height:20px;color:#111;letter-spacing:-0.28px">existing processes but also prompts companies to reevaluate their</div>
</body></html>
